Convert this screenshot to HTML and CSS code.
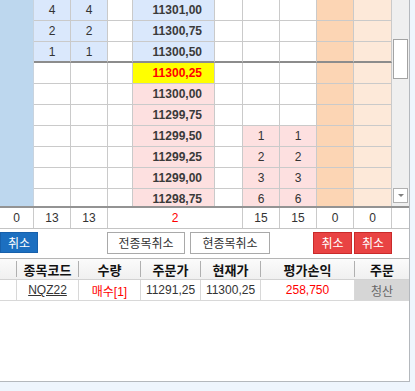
FILE: index.html
```html
<!DOCTYPE html>
<html lang="ko">
<head>
    <meta charset="UTF-8">
    <meta name="viewport" content="width=device-width, initial-scale=1.0">
    <title>호가 주문</title>
    <link rel="stylesheet" href="styles.css">
</head>
<body>
    <div class="panel">
        <!-- 호가창 -->
        <div class="book">
            <div class="book-scroll">
                <div class="gutter"></div>
                <div class="ladder">
                    <div class="lrow ask">
                        <div class="c q">4</div><div class="c q">4</div><div class="c mid"></div>
                        <div class="c price">11301,00</div>
                        <div class="c w1"></div><div class="c q plain"></div><div class="c q plain"></div>
                        <div class="c o1"></div><div class="c o2"></div>
                    </div>
                    <div class="lrow ask">
                        <div class="c q">2</div><div class="c q">2</div><div class="c mid"></div>
                        <div class="c price">11300,75</div>
                        <div class="c w1"></div><div class="c q plain"></div><div class="c q plain"></div>
                        <div class="c o1"></div><div class="c o2"></div>
                    </div>
                    <div class="lrow ask split">
                        <div class="c q">1</div><div class="c q">1</div><div class="c mid"></div>
                        <div class="c price">11300,50</div>
                        <div class="c w1"></div><div class="c q plain"></div><div class="c q plain"></div>
                        <div class="c o1"></div><div class="c o2"></div>
                    </div>
                    <div class="lrow bid">
                        <div class="c q plain"></div><div class="c q plain"></div><div class="c mid"></div>
                        <div class="c price current">11300,25</div>
                        <div class="c w1"></div><div class="c q plain"></div><div class="c q plain"></div>
                        <div class="c o1"></div><div class="c o2"></div>
                    </div>
                    <div class="lrow bid">
                        <div class="c q plain"></div><div class="c q plain"></div><div class="c mid"></div>
                        <div class="c price">11300,00</div>
                        <div class="c w1"></div><div class="c q plain"></div><div class="c q plain"></div>
                        <div class="c o1"></div><div class="c o2"></div>
                    </div>
                    <div class="lrow bid">
                        <div class="c q plain"></div><div class="c q plain"></div><div class="c mid"></div>
                        <div class="c price">11299,75</div>
                        <div class="c w1"></div><div class="c q plain"></div><div class="c q plain"></div>
                        <div class="c o1"></div><div class="c o2"></div>
                    </div>
                    <div class="lrow bid">
                        <div class="c q plain"></div><div class="c q plain"></div><div class="c mid"></div>
                        <div class="c price">11299,50</div>
                        <div class="c w1"></div><div class="c q">1</div><div class="c q">1</div>
                        <div class="c o1"></div><div class="c o2"></div>
                    </div>
                    <div class="lrow bid">
                        <div class="c q plain"></div><div class="c q plain"></div><div class="c mid"></div>
                        <div class="c price">11299,25</div>
                        <div class="c w1"></div><div class="c q">2</div><div class="c q">2</div>
                        <div class="c o1"></div><div class="c o2"></div>
                    </div>
                    <div class="lrow bid">
                        <div class="c q plain"></div><div class="c q plain"></div><div class="c mid"></div>
                        <div class="c price">11299,00</div>
                        <div class="c w1"></div><div class="c q">3</div><div class="c q">3</div>
                        <div class="c o1"></div><div class="c o2"></div>
                    </div>
                    <div class="lrow bid">
                        <div class="c q plain"></div><div class="c q plain"></div><div class="c mid"></div>
                        <div class="c price">11298,75</div>
                        <div class="c w1"></div><div class="c q">6</div><div class="c q">6</div>
                        <div class="c o1"></div><div class="c o2"></div>
                    </div>
                </div>
                <!-- 세로 스크롤바 -->
                <div class="vscroll">
                    <div class="thumb"></div>
                    <div class="arrow-down"><span class="tri"></span></div>
                </div>
            </div>
            <!-- 합계 행 -->
            <div class="sum-row">
                <div class="s s-g">0</div>
                <div class="s s-q">13</div>
                <div class="s s-q">13</div>
                <div class="s s-mid">2</div>
                <div class="s s-q">15</div>
                <div class="s s-q">15</div>
                <div class="s s-q">0</div>
                <div class="s s-o2">0</div>
                <div class="s s-bar"></div>
            </div>
        </div>

        <!-- 취소 버튼 -->
        <div class="actions">
            <button class="btn btn-blue">취소</button>
            <button class="btn btn-white btn-all">전종목취소</button>
            <button class="btn btn-white btn-cur">현종목취소</button>
            <button class="btn btn-red btn-red1">취소</button>
            <button class="btn btn-red btn-red2">취소</button>
        </div>

        <!-- 잔고 목록 -->
        <div class="orders">
            <div class="o-head">
                <div class="h h0"><span>구분</span></div>
                <div class="h h1">종목코드</div>
                <div class="h h2">수량</div>
                <div class="h h3">주문가</div>
                <div class="h h4">현재가</div>
                <div class="h h5">평가손익</div>
                <div class="h h6">주문</div>
            </div>
            <div class="o-row">
                <div class="d h0"></div>
                <div class="d h1"><span class="code">NQZ22</span></div>
                <div class="d h2 red">매수[1]</div>
                <div class="d h3">11291,25</div>
                <div class="d h4">11300,25</div>
                <div class="d h5 red">258,750</div>
                <div class="d h6 liq">청산</div>
            </div>
            <div class="o-empty"></div>
        </div>
    </div>
</body>
</html>
```

FILE: styles.css
```css
/* 기본 */
* {
    box-sizing: border-box;
}

body {
    margin: 0;
    background: #eef5fd;
    font-family: "Liberation Sans", "Noto Sans CJK KR", sans-serif;
    font-size: 12px;
    color: #333;
}

.panel {
    width: 410px;
    height: 382px;
    background: #fff;
    border-right: 1px solid #b4b8bd;
    border-bottom: 1px solid #b4b8bd;
    display: flex;
    flex-direction: column;
}

/* 호가창 */
.book-scroll {
    height: 206px;
    overflow: hidden;
    display: flex;
}

.gutter {
    width: 34px;
    flex: none;
    background: #bdd7ee;
    border-right: 1px solid #c8d3de;
}

.ladder {
    width: 358px;
    flex: none;
}

.lrow {
    display: flex;
    height: 21px;
}

.c {
    height: 21px;
    border-right: 1px solid #cacaca;
    border-bottom: 1px solid #cacaca;
    display: flex;
    align-items: center;
    justify-content: center;
    flex: none;
    line-height: 14px;
}

.lrow.split .c {
    border-bottom: 2px solid #8c8c8c;
}

.q { width: 37px; }
.mid { width: 25px; }
.w1 { width: 28px; }
.o1 { width: 37px; background: #fcd5b4; }
.o2 { width: 38px; background: #fde9d9; }

.price {
    width: 82px;
    justify-content: flex-end;
    padding-right: 12px;
    font-weight: bold;
    color: #3a3a3a;
}

.ask .q,
.ask .price {
    background: #dae8fc;
}

.ask .q.plain {
    background: #fff;
}

.bid .price,
.bid .q {
    background: #fde0e0;
}

.bid .q.plain {
    background: #fff;
}

.price.current {
    background: #ffff00;
    color: #ff0000;
}

/* 스크롤바 */
.vscroll {
    width: 17px;
    flex: none;
    background: #efefef;
    display: flex;
    flex-direction: column;
    align-items: center;
}

.thumb {
    width: 15px;
    height: 40px;
    margin-top: 39px;
    background: #fff;
    border: 1px solid #a3a3a3;
}

.arrow-down {
    width: 15px;
    height: 15px;
    margin-top: auto;
    margin-bottom: 3px;
    background: #fff;
    border: 1px solid #b0b0b0;
    display: flex;
    align-items: center;
    justify-content: center;
}

.tri {
    width: 0;
    height: 0;
    border-left: 3px solid transparent;
    border-right: 3px solid transparent;
    border-top: 3px solid #808080;
}

/* 합계 */
.sum-row {
    display: flex;
    height: 23px;
    border-top: 2px solid #939393;
    border-bottom: 1px solid #c4c4c4;
}

.s {
    flex: none;
    border-right: 1px solid #cacaca;
    display: flex;
    align-items: center;
    justify-content: center;
}

.s-g { width: 34px; }
.s-q { width: 37px; }
.s-mid { width: 135px; color: #ff0000; }
.s-o2 { width: 38px; }
.s-bar { width: 17px; border-right: none; }

/* 버튼 */
.actions {
    height: 29px;
    padding-top: 3px;
    display: flex;
    align-items: flex-start;
}

.btn {
    height: 21px;
    padding: 0;
    font-family: "Noto Sans CJK KR", sans-serif;
    font-size: 12px;
    line-height: 18px;
    cursor: pointer;
}

.btn-blue {
    width: 38px;
    background: #1c6fc0;
    border: 1px solid #1760ab;
    color: #fff;
}

.btn-white {
    width: 78px;
    height: 22px;
    background: #fff;
    border: 1px solid #a9a9a9;
    color: #333;
}

.btn-all { margin-left: 69px; }
.btn-cur { margin-left: 5px; width: 80px; }

.btn-red {
    width: 39px;
    height: 22px;
    background: #e94343;
    border: 1px solid #c92a2a;
    color: #fff;
}

.btn-red1 { margin-left: 43px; }
.btn-red2 { margin-left: 2px; width: 38px; }

/* 잔고 목록 */
.orders {
    flex: 1;
    border-top: 1px solid #b5b5b5;
    display: flex;
    flex-direction: column;
}

.o-head {
    height: 21px;
    display: flex;
    align-items: center;
    background: linear-gradient(#fbfbfb, #f0f0f0);
    border-bottom: 1px solid #d2d2d2;
}

.h {
    flex: none;
    height: 16px;
    border-right: 1px solid #b0b0b0;
    display: flex;
    align-items: center;
    justify-content: center;
    font-family: "Noto Sans CJK KR", sans-serif;
    font-size: 13px;
    font-weight: bold;
    color: #111;
    white-space: nowrap;
    overflow: hidden;
}

/* 가로로 스크롤되어 잘린 첫 열 */
.h0 { width: 17px; justify-content: flex-end; padding-right: 16px; }
.h1 { width: 62px; }
.h2 { width: 62px; }
.h3 { width: 60px; }
.h4 { width: 60px; }
.h5 { width: 94px; }
.h6 { width: 54px; border-right: none; }

.o-row {
    height: 21px;
    display: flex;
    border-bottom: 1px solid #d8d8d8;
}

.d {
    flex: none;
    height: 20px;
    border-right: 1px solid #d8d8d8;
    display: flex;
    align-items: center;
    justify-content: center;
    font-size: 12px;
    color: #333;
}

.code {
    text-decoration: underline;
}

.red {
    color: #ff0000;
}

.liq {
    background: #d6d6d6;
    color: #666;
    border-right: none;
    font-family: "Noto Sans CJK KR", sans-serif;
}

.o-empty {
    flex: 1;
}
```
